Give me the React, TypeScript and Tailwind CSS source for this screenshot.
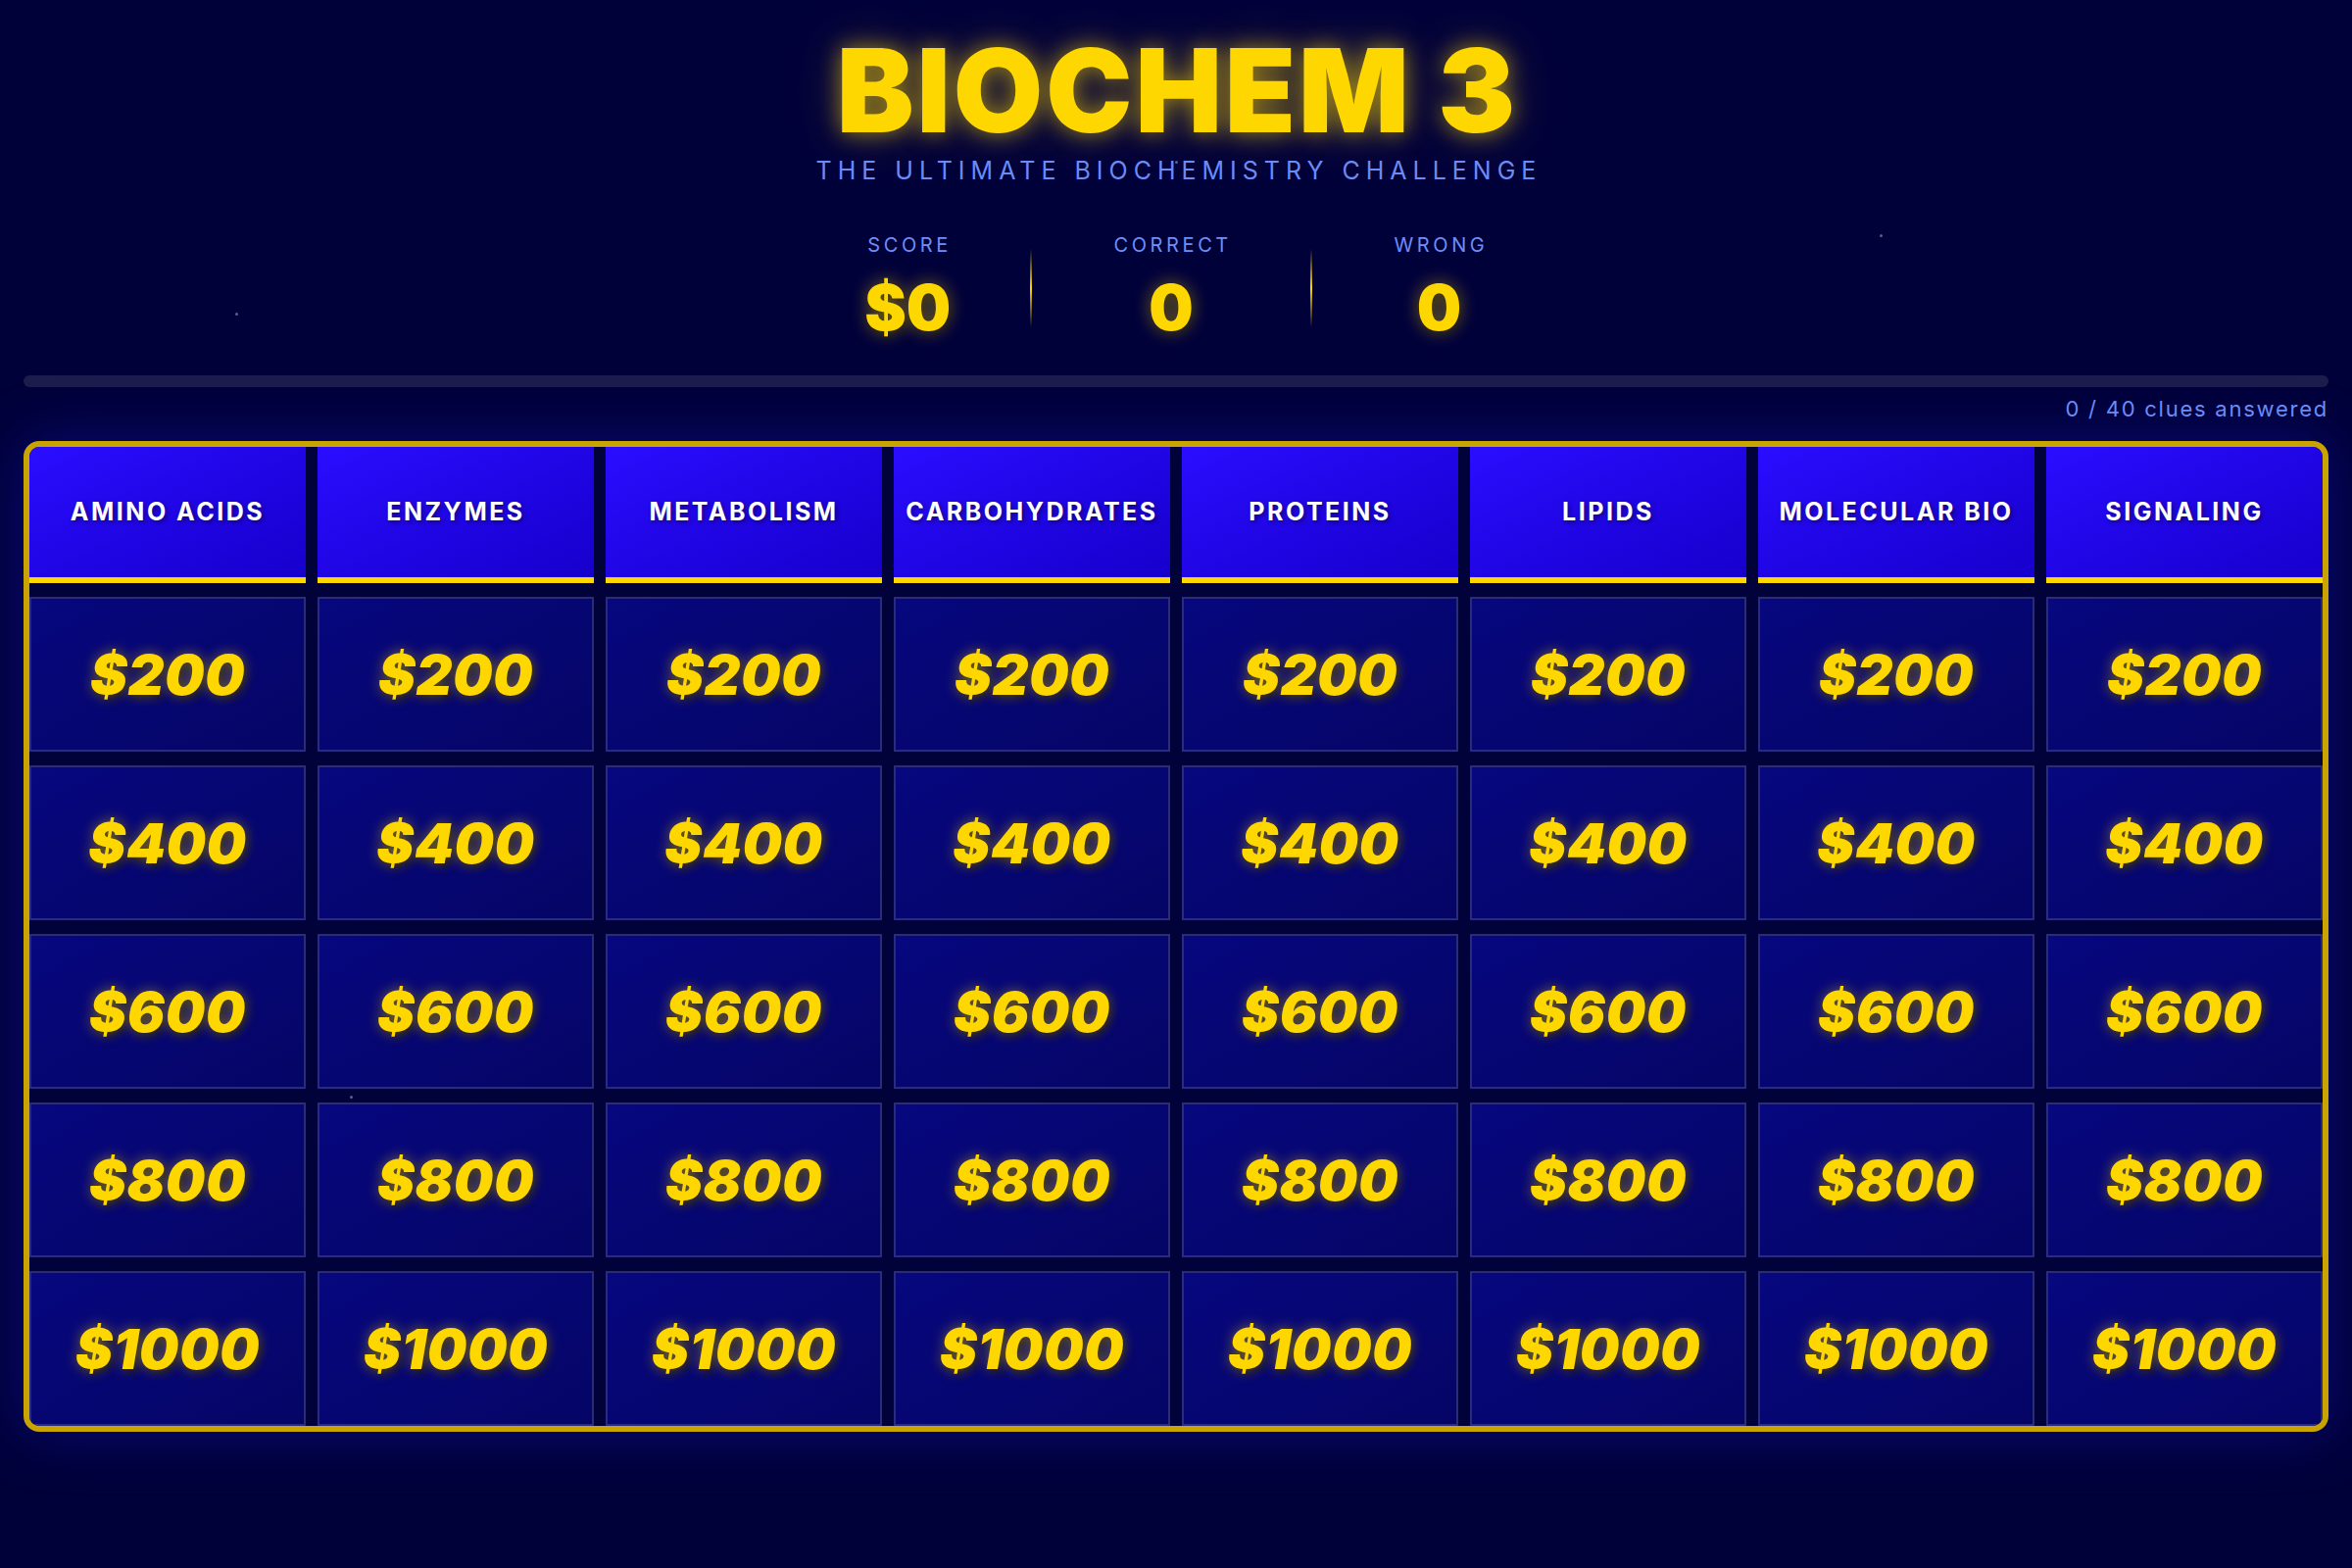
import React from 'react';

const categories = [
  'Amino Acids',
  'Enzymes',
  'Metabolism',
  'Carbohydrates',
  'Proteins',
  'Lipids',
  'Molecular Bio',
  'Signaling',
];

const values = [200, 400, 600, 800, 1000];

// decorative background specks
const stars = [
  { left: 240, top: 319, size: 3 },
  { left: 1918, top: 239, size: 3 },
  { left: 357, top: 1118, size: 3 },
  { left: 1199, top: 164, size: 3 },
];

function Stat({ label, value }: { label: string; value: string }) {
  return (
    <div className="flex flex-col items-center">
      <div className="text-[20px] leading-none tracking-[0.18em] pl-[0.18em] text-[#6f8df7] font-normal">
        {label}
      </div>
      <div className="mt-[22px] text-[64px] leading-none font-black text-[#ffd700] [text-shadow:0_0_18px_rgba(255,215,0,0.45),2px_3px_6px_rgba(0,0,0,0.55)]">
        {value}
      </div>
    </div>
  );
}

function Divider() {
  return <div className="w-[2px] h-[80px] mt-[14px] bg-gradient-to-b from-transparent via-[#ffd700] to-transparent" />;
}

export default function App() {
  return (
    <main
      className="relative min-h-screen bg-[#01013a] overflow-hidden"
      style={{ fontFamily: 'Inter, "Noto Sans", sans-serif' }}
    >
      {stars.map((s, i) => (
        <div
          key={i}
          className="absolute rounded-full bg-[#7b84c8] opacity-70"
          style={{ left: s.left, top: s.top, width: s.size, height: s.size }}
        />
      ))}

      {/* Header */}
      <header className="flex flex-col items-center pt-[33px]">
        <h1 className="text-[118px] leading-none font-black tracking-[0.025em] pl-[0.025em] text-[#ffd700] [text-shadow:0_0_22px_rgba(255,215,0,0.55),0_0_50px_rgba(255,215,0,0.25)]">
          BIOCHEM 3
        </h1>
        <p className="mt-[11px] text-[25px] leading-none font-normal tracking-[0.24em] pl-[0.24em] text-[#6b8bf5]">
          THE ULTIMATE BIOCHEMISTRY CHALLENGE
        </p>
      </header>

      {/* Score row */}
      <section className="mt-[53px] flex justify-center items-start gap-[80px]">
        <Stat label="SCORE" value="$0" />
        <Divider />
        <Stat label="CORRECT" value="0" />
        <Divider />
        <Stat label="WRONG" value="0" />
      </section>

      {/* Progress */}
      <section className="mt-[37px] px-[24px]">
        <div className="h-[12px] rounded-full bg-[#1c1c4d]" />
        <div className="mt-[11px] text-right text-[22px] leading-none tracking-[0.08em] text-[#6b8bf5]">
          0 / 40 clues answered
        </div>
      </section>

      {/* Board */}
      <section className="mt-[22px] mx-[24px] rounded-[16px] border-[6px] border-[#c9a300] overflow-hidden bg-[#02023a] shadow-[0_0_60px_rgba(30,30,230,0.35)] grid grid-cols-8 grid-rows-[139px_repeat(5,158px)] gap-x-[12px] gap-y-[14px]">
        {categories.map((c) => (
          <div
            key={c}
            className="flex items-center justify-center border-b-[6px] border-[#ffd700] bg-gradient-to-br from-[#2a0dff] to-[#1600cc]"
          >
            <span className="text-[25px] font-bold uppercase tracking-[0.1em] text-white [text-shadow:2px_2px_4px_rgba(0,0,0,0.45)]">
              {c}
            </span>
          </div>
        ))}
        {values.map((v) =>
          categories.map((c) => (
            <button
              key={`${c}-${v}`}
              className="flex items-center justify-center border-[2px] border-[#2b2b7c] bg-gradient-to-br from-[#07077f] to-[#050566]"
            >
              <span className="text-[57px] leading-none font-black italic tracking-[0.01em] text-[#ffd700] [text-shadow:0_0_14px_rgba(255,215,0,0.45),3px_4px_7px_rgba(0,0,0,0.6)]">
                ${v}
              </span>
            </button>
          ))
        )}
      </section>
    </main>
  );
}
